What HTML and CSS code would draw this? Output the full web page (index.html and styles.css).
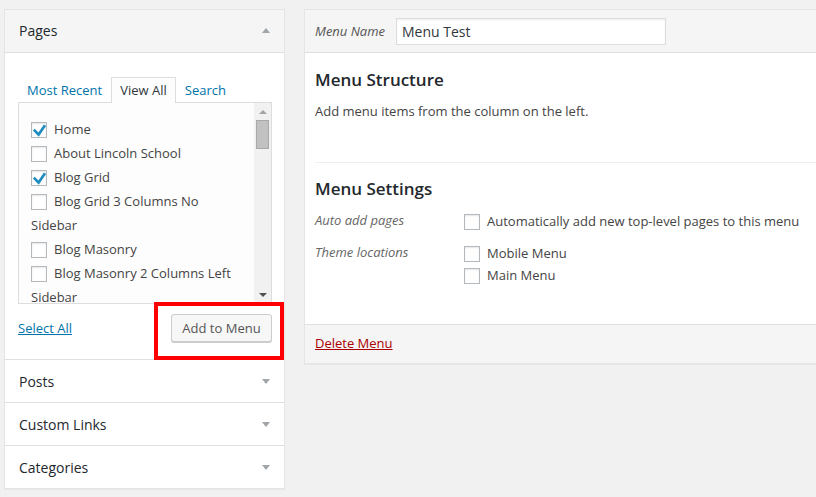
FILE: index.html
```html
<!DOCTYPE html>
<html>
<head>
<meta charset="utf-8">
<link rel="stylesheet" href="styles.css">
</head>
<body>
<div class="wrap">
  <div class="panel left">
    <div class="acc open">
      <div class="acc-title">Pages <span class="arrow up"></span></div>
      <div class="acc-content">
        <ul class="tabs">
          <li>Most Recent</li>
          <li class="active">View All</li>
          <li>Search</li>
        </ul>
        <div class="tabpanel">
          <ul class="checklist">
            <li><span class="cb checked"><svg width="16" height="16" viewBox="0 0 16 16"><polyline points="2.8,7.6 7.6,12.6 14,3.2" fill="none" stroke="#1e8cbe" stroke-width="2.6"/></svg></span>Home</li>
            <li><span class="cb"></span>About Lincoln School</li>
            <li><span class="cb checked"><svg width="16" height="16" viewBox="0 0 16 16"><polyline points="2.8,7.6 7.6,12.6 14,3.2" fill="none" stroke="#1e8cbe" stroke-width="2.6"/></svg></span>Blog Grid</li>
            <li><span class="cb"></span>Blog Grid 3 Columns No Sidebar</li>
            <li><span class="cb"></span>Blog Masonry</li>
            <li><span class="cb"></span>Blog Masonry 2 Columns Left Sidebar</li>
            <li><span class="cb"></span>Blog Masonry 2 Columns Right Sidebar</li>
          </ul>
          <div class="scrollbar">
            <div class="sb-btn"><span class="sb-up"></span></div>
            <div class="sb-thumb"></div>
            <div class="sb-fill"></div>
            <div class="sb-btn"><span class="sb-down"></span></div>
          </div>
        </div>
        <div class="actions">
          <a class="link">Select All</a>
          <span class="button">Add to Menu</span>
        </div>
        <div class="highlight"></div>
      </div>
    </div>
    <div class="acc"><div class="acc-title plain">Posts <span class="arrow down"></span></div></div>
    <div class="acc"><div class="acc-title plain">Custom Links <span class="arrow down"></span></div></div>
    <div class="acc last"><div class="acc-title plain">Categories <span class="arrow down"></span></div></div>
  </div>

  <div class="panel right">
    <div class="menu-header">
      <span class="name-label">Menu Name</span>
      <span class="name-input">Menu Test</span>
    </div>
    <div class="menu-body">
      <h3 class="h-struct">Menu Structure</h3>
      <p class="instr">Add menu items from the column on the left.</p>
      <div class="settings">
        <h3 class="h-settings">Menu Settings</h3>
        <div class="row row-auto">
          <div class="dt">Auto add pages</div>
          <div class="dd">
            <div class="opt"><span class="cb"></span>Automatically add new top-level pages to this menu</div>
          </div>
        </div>
        <div class="row row-theme">
          <div class="dt">Theme locations</div>
          <div class="dd">
            <div class="opt"><span class="cb"></span>Mobile Menu</div>
            <div class="opt"><span class="cb"></span>Main Menu</div>
          </div>
        </div>
      </div>
    </div>
    <div class="menu-footer">
      <a class="delete">Delete Menu</a>
    </div>
  </div>
</div>
</body>
</html>
```

FILE: styles.css
```css
html, body {
  margin: 0;
  padding: 0;
  overflow: hidden;
}
body {
  background: #f1f1f1;
  font-family: "Open Sans", "Noto Sans", sans-serif;
  font-size: 13px;
  color: #444;
  width: 816px;
  height: 497px;
}
.wrap {
  display: flex;
  align-items: flex-start;
  gap: 19px;
  padding: 9px 0 0 4px;
}
.panel {
  background: #fff;
  border: 1px solid #e5e5e5;
  box-shadow: 0 1px 1px rgba(0,0,0,.04);
}
.left {
  width: 281px;
  box-sizing: border-box;
  flex: none;
}
.acc {
  border-bottom: 1px solid #dfdfdf;
}
.acc.last {
  border-bottom: 0;
}
.acc-title {
  height: 42px;
  box-sizing: border-box;
  display: flex;
  align-items: center;
  justify-content: space-between;
  padding: 0 14px 0 14px;
  font-size: 14px;
  line-height: 21px;
  color: #23282d;
}
.open .acc-title {
  background: #f5f5f5;
  border-bottom: 1px solid #dfdfdf;
  height: 43px;
  padding-bottom: 1px;
}
.arrow {
  width: 0;
  height: 0;
  border-left: 4px solid transparent;
  border-right: 4px solid transparent;
}
.arrow.up {
  border-bottom: 5px solid #a0a5aa;
}
.arrow.down {
  border-top: 5px solid #a0a5aa;
}
.acc-content {
  position: relative;
  padding: 24px 12px 0 13px;
}
.tabs {
  display: flex;
  margin: 0;
  padding: 0;
  list-style: none;
}
.tabs li {
  padding: 3px 8px 4px;
  line-height: 18px;
  border: 1px solid transparent;
  border-bottom: 0;
  margin-bottom: -1px;
  color: #0073aa;
}
.tabs li.active {
  border-color: #ddd;
  background: #fdfdfd;
  color: #32373c;
  position: relative;
  z-index: 1;
}
.tabpanel {
  display: flex;
  height: 202px;
  box-sizing: border-box;
  border: 1px solid #ddd;
  background: #fdfdfd;
}
.checklist {
  flex: 1;
  overflow: hidden;
  margin: 0;
  padding: 14px 10px 0 12px;
  list-style: none;
}
.checklist li {
  line-height: 24px;
  color: #444;
}
.cb {
  display: inline-block;
  width: 16px;
  height: 16px;
  box-sizing: border-box;
  border: 1px solid #b4b9be;
  background: #fff;
  box-shadow: inset 0 1px 2px rgba(0,0,0,.1);
  vertical-align: -4px;
  margin-right: 7px;
  position: relative;
}
.cb svg {
  position: absolute;
  left: -1px;
  top: -1px;
}
.scrollbar {
  width: 17px;
  flex: none;
  background: #f1f1f1;
  display: flex;
  flex-direction: column;
}
.sb-btn {
  height: 17px;
  display: flex;
  align-items: center;
  justify-content: center;
}
.sb-up {
  width: 0; height: 0;
  border-left: 4px solid transparent;
  border-right: 4px solid transparent;
  border-bottom: 4px solid #a3a3a3;
}
.sb-down {
  width: 0; height: 0;
  border-left: 4px solid transparent;
  border-right: 4px solid transparent;
  border-top: 4px solid #505050;
}
.sb-thumb {
  height: 29px;
  margin: 0 2px;
  background: #c1c1c1;
  border: 1px solid #a9a9a9;
  box-sizing: border-box;
}
.sb-fill {
  flex: 1;
}
.actions {
  display: flex;
  justify-content: space-between;
  align-items: center;
  height: 55px;
  box-sizing: border-box;
  padding: 10px 0 17px;
}
.link {
  color: #0073aa;
  text-decoration: underline;
  line-height: 19px;
}
.button {
  display: block;
  height: 28px;
  box-sizing: border-box;
  line-height: 26px;
  padding: 0;
  width: 101px;
  white-space: nowrap;
  text-align: center;
  border: 1px solid #ccc;
  border-radius: 3px;
  background: #f7f7f7;
  box-shadow: 0 1px 0 #ccc;
  color: #555;
}
.highlight {
  position: absolute;
  left: 149px;
  top: 249px;
  width: 130px;
  height: 58px;
  box-sizing: border-box;
  border: 4px solid #f00;
}

/* right panel */
.right {
  flex: 1;
  border-right: 0;
}
.menu-header {
  height: 43px;
  box-sizing: border-box;
  background: #f5f5f5;
  border-bottom: 1px solid #dfdfdf;
  display: flex;
  align-items: center;
  padding: 0 10px;
}
.name-label {
  width: 81px;
  font-style: italic;
  color: #555;
}
.name-input {
  width: 270px;
  height: 27px;
  box-sizing: border-box;
  border: 1px solid #ddd;
  background: #fff;
  box-shadow: inset 0 1px 2px rgba(0,0,0,.07);
  font-size: 14px;
  line-height: 25px;
  padding: 0 5px;
  color: #32373c;
  margin-top: 1px;
}
.menu-body {
  padding: 0 0 38px 10px;
}
h3 {
  font-size: 17px;
  font-weight: 600;
  line-height: 24px;
  color: #23282d;
  margin: 0;
}
.h-struct {
  padding-top: 15px;
}
.instr {
  margin: 10px 0 0;
  line-height: 19px;
}
.settings {
  margin-top: 41px;
  border-top: 1px solid #eee;
}
.h-settings {
  margin-top: 14px;
}
.row {
  display: flex;
}
.row-auto {
  margin-top: 9px;
}
.row-theme {
  margin-top: 10px;
}
.dt {
  width: 149px;
  flex: none;
  font-style: italic;
  color: #666;
  line-height: 22px;
  margin-top: -1px;
}
.opt {
  line-height: 22px;
}
.menu-footer {
  background: #f5f5f5;
  border-top: 1px solid #dfdfdf;
  padding: 9px 10px 10px;
  line-height: 19px;
}
.delete {
  color: #a00;
  text-decoration: underline;
}
```
